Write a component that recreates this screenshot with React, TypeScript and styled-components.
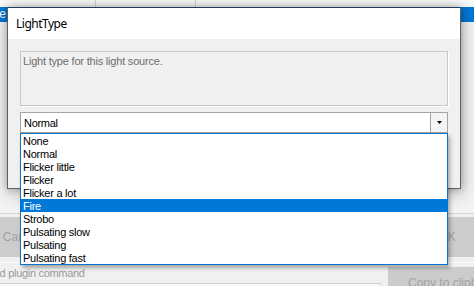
import React from "react";
import styled, { createGlobalStyle } from "styled-components";

const Global = createGlobalStyle`
  html, body { margin: 0; padding: 0; background: #f0f0f0; }
  body { width: 474px; height: 286px; overflow: hidden; }
  #root { width: 474px; height: 286px; }
`;

const Screen = styled.div`
  position: relative;
  width: 474px;
  height: 286px;
  overflow: hidden;
  display: flex;
  flex-direction: column;
  background: #f0f0f0;
  font-family: "Liberation Sans", Arial, sans-serif;
`;

const Grid = styled.div`
  flex: 0 0 213px;
  display: flex;
  flex-direction: column;
  background: #f4f4f4;
`;

const GridRow = styled.div<{ $selected?: boolean; $h: number }>`
  display: flex;
  flex: 0 0 ${(p) => p.$h}px;
  height: ${(p) => p.$h}px;
  background: ${(p) => (p.$selected ? "#0078d7" : "#f8f8f8")};
  color: ${(p) => (p.$selected ? "#ffffff" : "#444")};
  font-size: 12px;
  line-height: ${(p) => p.$h}px;
  overflow: hidden;
`;

const GridCell = styled.div<{ $w?: number; $line?: boolean }>`
  flex: ${(p) => (p.$w ? `0 0 ${p.$w}px` : "1")};
  box-sizing: border-box;
  border-right: ${(p) => (p.$line ? "1px solid #d4d4d4" : "none")};
  overflow: hidden;
  white-space: nowrap;
`;

const ClippedText = styled.span<{ $shift: number }>`
  display: inline-block;
  margin-left: ${(p) => -p.$shift}px;
`;

const Divider = styled.div<{ $color: string }>`
  flex: 0 0 1px;
  background: ${(p) => p.$color};
`;

const ButtonBar = styled.div`
  flex: 0 0 44px;
  display: flex;
  justify-content: space-between;
  align-items: flex-start;
  padding-top: 3px;
  box-sizing: border-box;
`;

const BgButton = styled.div<{ $w: number; $edge: "left" | "right" }>`
  flex: 0 0 ${(p) => p.$w}px;
  height: 40px;
  background: #cccccc;
  color: #a2a2a2;
  font-size: 12px;
  line-height: 40px;
  text-align: center;
  ${(p) => (p.$edge === "left" ? "margin-left: -16px;" : "margin-right: -20px;")}
`;

const Gap = styled.div`
  flex: 0 0 4px;
`;

const BottomRow = styled.div`
  flex: 1;
  display: flex;
`;

const LabelColumn = styled.div`
  flex: 0 0 381px;
  display: flex;
  flex-direction: column;
`;

const Label = styled.div`
  height: 20px;
  line-height: 20px;
  font-size: 11px;
  letter-spacing: -0.3px;
  color: #9a9a9a;
  white-space: nowrap;
  overflow: hidden;
`;

const TextBox = styled.div`
  flex: 1;
  border-top: 1px solid #d2d2d2;
  border-right: 1px solid #d2d2d2;
  background: #f7f7f7;
`;

const CopyButton = styled.div`
  flex: 1;
  margin: 4px 0 0 7px;
  background: #cccccc;
  color: #a2a2a2;
  font-size: 12px;
  line-height: 14px;
  padding: 9px 0 0 20px;
  white-space: nowrap;
  overflow: hidden;
`;

/* ---------- dialog ---------- */

const Dialog = styled.div`
  position: absolute;
  left: 7px;
  top: 7px;
  width: 454px;
  height: 182px;
  box-sizing: border-box;
  border: 1px solid #606060;
  border-top-color: #1f3d5f;
  background: #f0f0f0;
  box-shadow: 0 0 8px rgba(0, 0, 0, 0.3), 2px 6px 18px rgba(0, 0, 0, 0.22);
  display: flex;
  flex-direction: column;
`;

const DialogTitle = styled.div`
  flex: 0 0 31px;
  height: 31px;
  background: #ffffff;
  padding-left: 8px;
  font-family: "Noto Sans", "Liberation Sans", sans-serif;
  font-size: 12px;
  line-height: 31px;
  letter-spacing: -0.5px;
  color: #000;
`;

const DialogBody = styled.div`
  display: flex;
  flex-direction: column;
  padding: 12px 12px 0 12px;
`;

const Description = styled.div`
  height: 55px;
  box-sizing: border-box;
  border: 1px solid #c8c8c8;
  box-shadow: 1px 1px 0 #ffffff;
  padding: 3px 2px;
  font-size: 11px;
  line-height: 13px;
  letter-spacing: -0.2px;
  color: #6d6d6d;
`;

const ComboWrap = styled.div`
  position: relative;
  margin-top: 6px;
`;

const Combo = styled.div`
  height: 21px;
  box-sizing: border-box;
  border: 1px solid #a3a3a3;
  background: #ffffff;
  display: flex;
`;

const ComboText = styled.div`
  flex: 1;
  padding-left: 3px;
  font-size: 11px;
  line-height: 20px;
  letter-spacing: -0.3px;
  color: #000;
`;

const ComboButton = styled.div`
  flex: 0 0 17px;
  box-sizing: border-box;
  border-left: 1px solid #a3a3a3;
  background: #f4f4f4;
  display: flex;
  align-items: center;
  justify-content: center;
  padding-left: 1px;
`;

const DropList = styled.div`
  position: absolute;
  top: 100%;
  left: 0;
  right: 0;
  box-sizing: border-box;
  border: 1px solid #0a74cc;
  background: #ffffff;
  box-shadow: 2px 3px 4px rgba(0, 0, 0, 0.3);
  z-index: 2;
`;

const Item = styled.div<{ $active?: boolean }>`
  height: 13px;
  line-height: 14px;
  padding-left: 2px;
  font-size: 11px;
  letter-spacing: -0.25px;
  white-space: nowrap;
  overflow: hidden;
  background: ${(p) => (p.$active ? "#0078d7" : "transparent")};
  color: ${(p) => (p.$active ? "#ffffff" : "#000000")};
`;

const options = [
  "None",
  "Normal",
  "Flicker little",
  "Flicker",
  "Flicker a lot",
  "Fire",
  "Strobo",
  "Pulsating slow",
  "Pulsating",
  "Pulsating fast",
];

export default function App() {
  return (
    <>
      <Global />
      <Screen>
        <Grid>
          <GridRow $h={7}>
            <GridCell $w={96} $line />
            <GridCell $w={100} $line />
            <GridCell />
          </GridRow>
          <GridRow $h={15} $selected>
            <GridCell $w={96}>
              <ClippedText $shift={20}>Type</ClippedText>
            </GridCell>
            <GridCell />
          </GridRow>
        </Grid>
        <Divider $color="#d8d8d8" />
        <ButtonBar>
          <BgButton $w={75} $edge="left">Cancel</BgButton>
          <BgButton $w={94} $edge="right">OK</BgButton>
        </ButtonBar>
        <Gap />
        <Divider $color="#fbfbfb" />
        <BottomRow>
          <LabelColumn>
            <Label>
              <ClippedText $shift={35}>Selected plugin command</ClippedText>
            </Label>
            <TextBox />
          </LabelColumn>
          <CopyButton>Copy to clipboard</CopyButton>
        </BottomRow>

        <Dialog>
          <DialogTitle>LightType</DialogTitle>
          <DialogBody>
            <Description>Light type for this light source.</Description>
            <ComboWrap>
              <Combo>
                <ComboText>Normal</ComboText>
                <ComboButton>
                  <svg width="5" height="3" viewBox="0 0 5 3">
                    <polygon points="0,0 5,0 2.5,3" fill="#000" />
                  </svg>
                </ComboButton>
              </Combo>
              <DropList>
                {options.map((o) => (
                  <Item key={o} $active={o === "Fire"}>
                    {o}
                  </Item>
                ))}
              </DropList>
            </ComboWrap>
          </DialogBody>
        </Dialog>
      </Screen>
    </>
  );
}
